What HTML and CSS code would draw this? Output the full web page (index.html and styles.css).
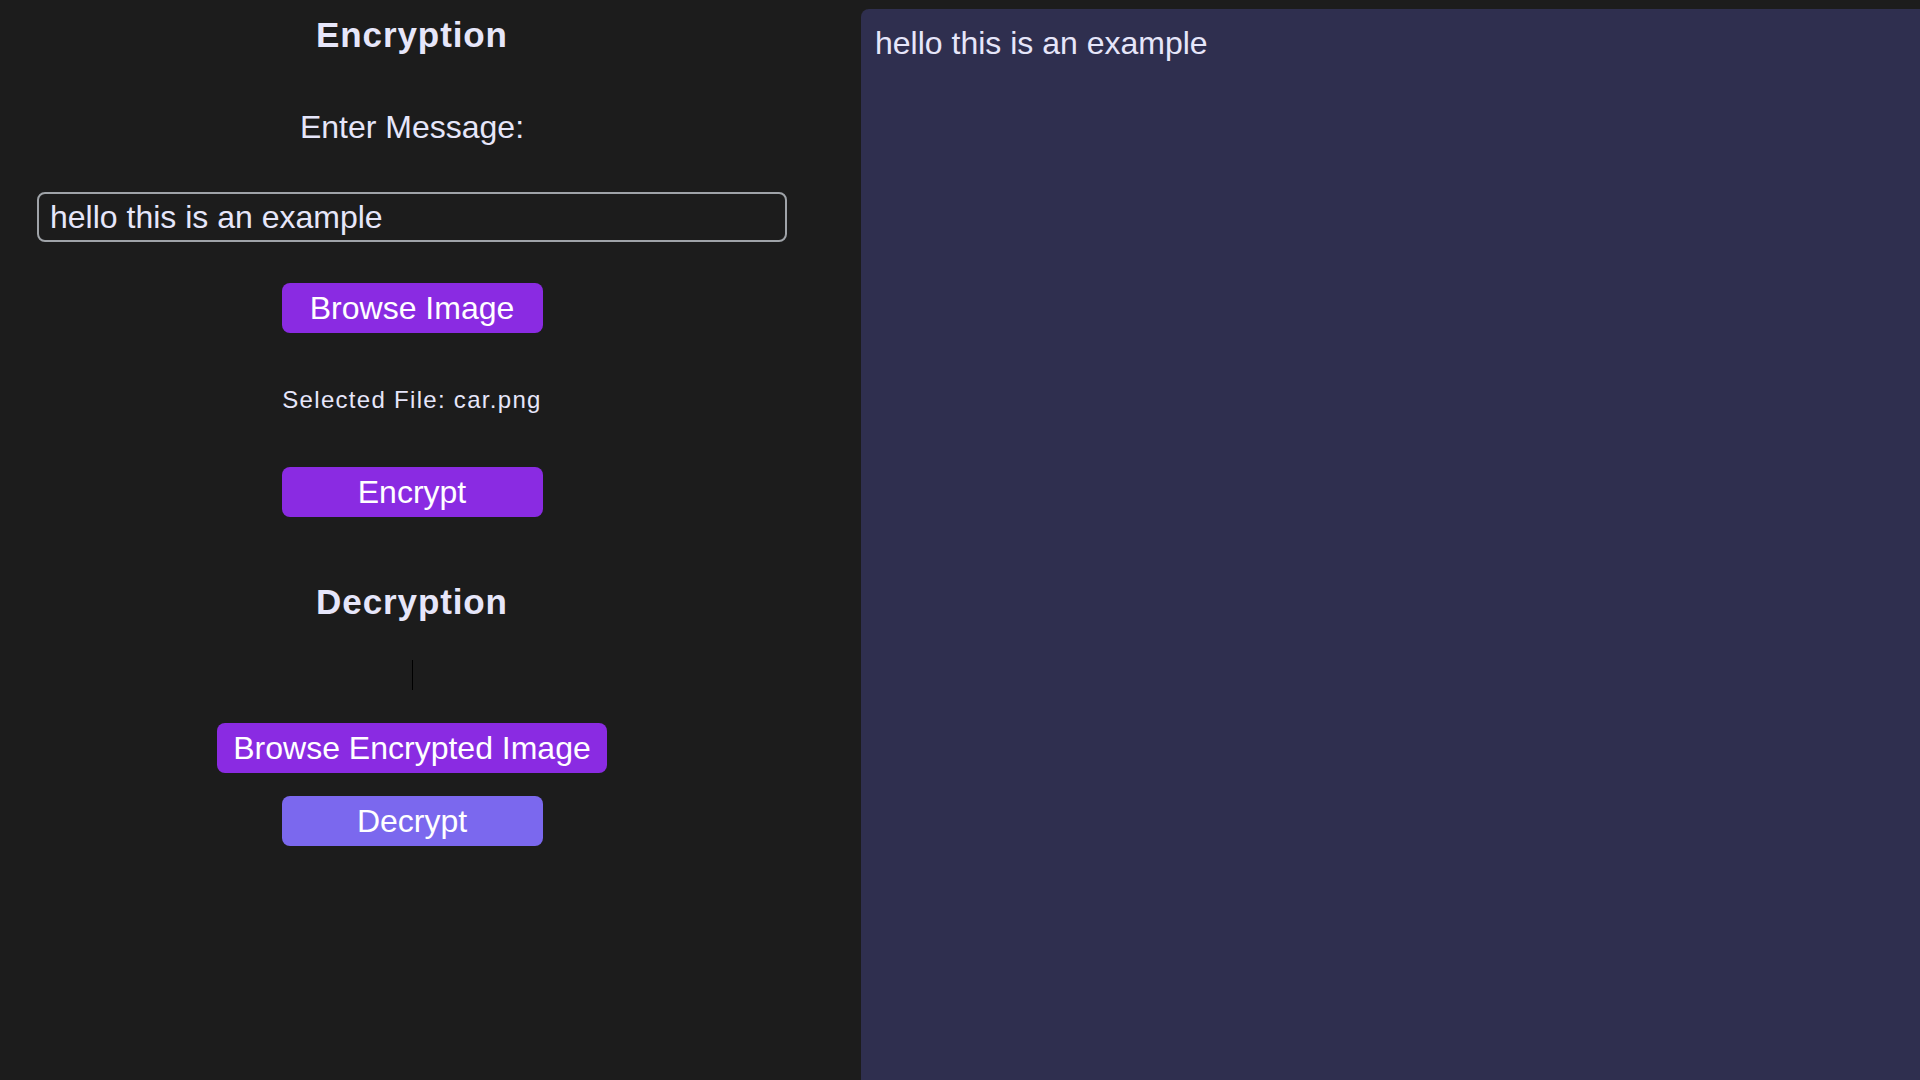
FILE: index.html
```html
<!DOCTYPE html>
<html lang="en">
<head>
<meta charset="utf-8">
<title>Image Steganography</title>
<link rel="stylesheet" href="styles.css">
</head>
<body>
<div class="app">
  <section class="controls">
    <h2 class="title title-enc">Encryption</h2>
    <label class="label" for="msg">Enter Message:</label>
    <input id="msg" class="message" type="text" value="hello this is an example">
    <button class="btn btn-browse">Browse Image</button>
    <p class="file">Selected File: car.png</p>
    <button class="btn btn-encrypt">Encrypt</button>
    <h2 class="title title-dec">Decryption</h2>
    <div class="caret"></div>
    <button class="btn btn-browse-enc">Browse Encrypted Image</button>
    <button class="btn btn-decrypt">Decrypt</button>
  </section>
  <section class="output">
    <p class="output-text">hello this is an example</p>
  </section>
</div>
</body>
</html>
```
FILE: styles.css
```css
* { box-sizing: border-box; }
html, body {
  margin: 0;
  padding: 0;
  height: 100%;
  background: #1c1c1c;
  overflow: hidden;
}
body {
  font-family: "Liberation Sans", Arial, sans-serif;
  color: #e6e6fa;
}
.app {
  display: flex;
  height: 1080px;
}
.controls {
  width: 824px;
  flex: none;
  padding: 0 37px;
  display: flex;
  flex-direction: column;
  align-items: center;
}
.title {
  margin: 0;
  font-size: 35px;
  line-height: 40px;
  font-weight: bold;
  letter-spacing: 0.9px;
  color: #e6e6fa;
}
.title-enc { margin-top: 15px; }
.title-dec { margin-top: 65px; }
.label {
  margin-top: 54px;
  font-size: 32px;
  line-height: 36px;
  color: #e6e6fa;
}
.message {
  margin-top: 47px;
  width: 750px;
  height: 50px;
  border: 2px solid #9fa3a8;
  border-radius: 8px;
  background: transparent;
  color: #e6e6fa;
  font-family: "Liberation Sans", Arial, sans-serif;
  font-size: 32px;
  padding: 0 11px;
  outline: none;
}
.btn {
  height: 50px;
  min-width: 261px;
  padding: 0 16px;
  border: none;
  border-radius: 8px;
  background: #8a2be2;
  color: #ffffff;
  font-family: "Liberation Sans", Arial, sans-serif;
  font-size: 32px;
  line-height: 50px;
  cursor: pointer;
}
.btn-browse { margin-top: 41px; }
.btn-encrypt { margin-top: 53px; }
.btn-browse-enc { margin-top: 33px; }
.btn-decrypt {
  margin-top: 23px;
  background: #7b68ee;
}
.file {
  margin: 53px 0 0;
  font-size: 24px;
  line-height: 28px;
  letter-spacing: 1.3px;
  color: #e6e6fa;
}
.caret {
  margin-top: 38px;
  width: 1px;
  height: 30px;
  background: #000000;
}
.output {
  flex: 1;
  margin: 9px 0 0 37px;
  background: #2f2f4f;
  border-top-left-radius: 8px;
  padding: 16px 14px;
}
.output-text {
  margin: 0;
  font-size: 32px;
  line-height: 36px;
  color: #e6e6fa;
}
```
